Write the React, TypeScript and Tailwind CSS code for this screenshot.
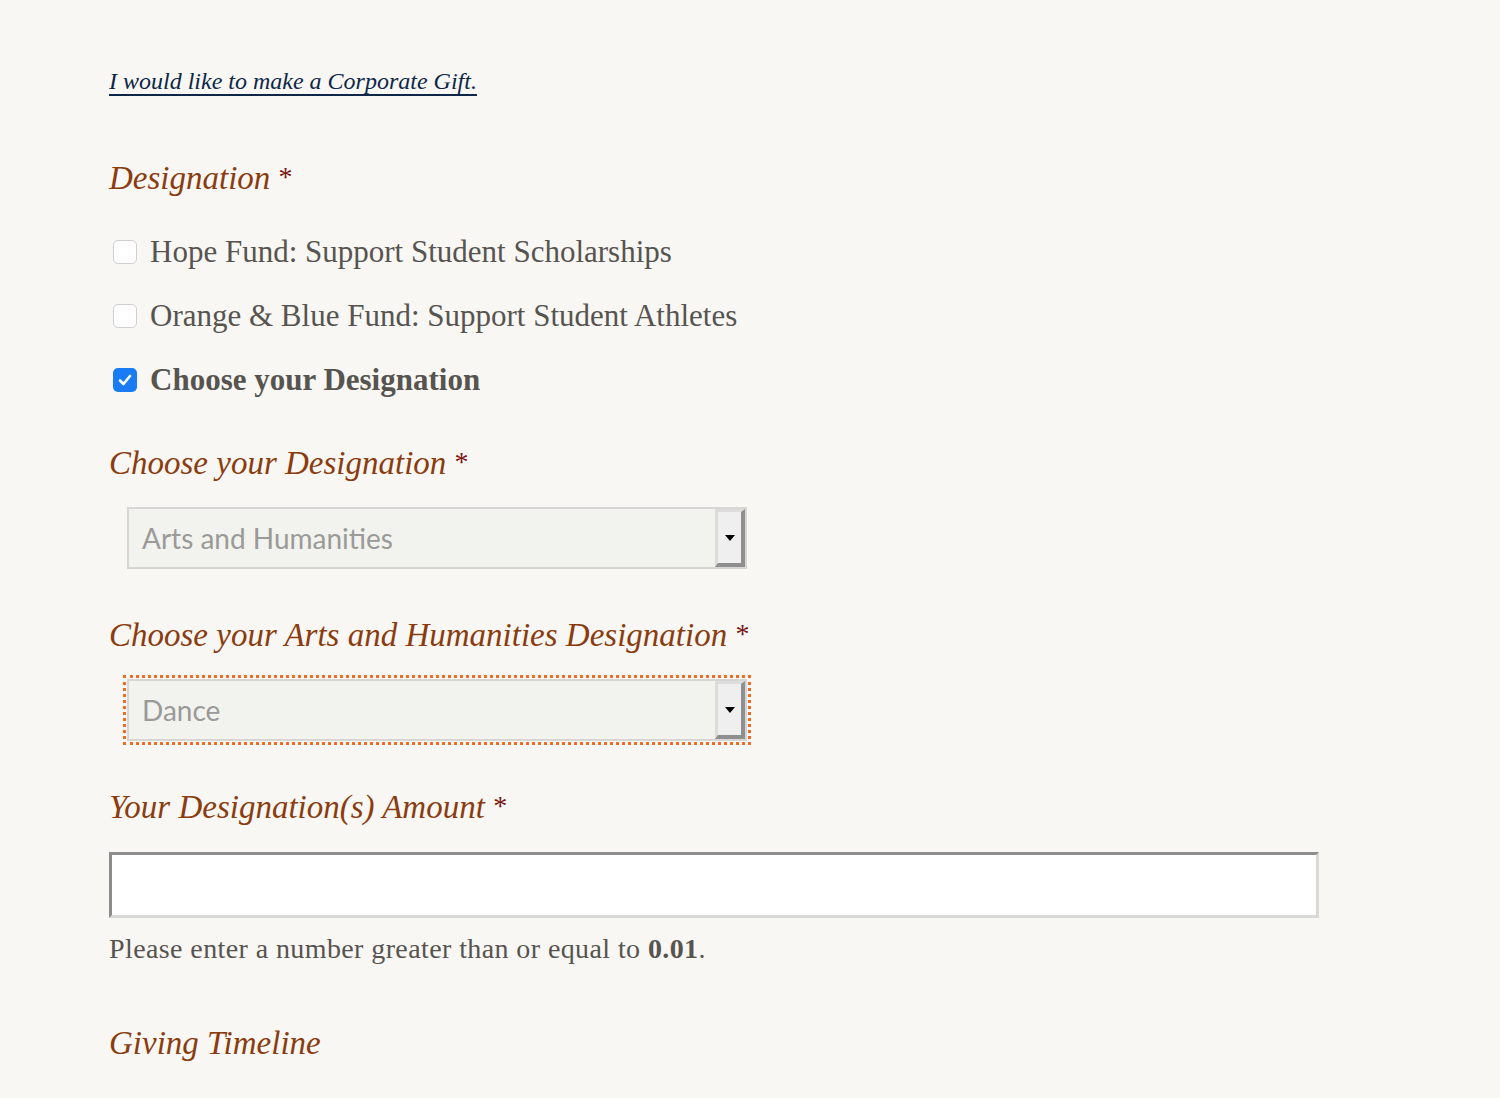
import React from "react";

const serif = { fontFamily: '"Liberation Serif", "DejaVu Serif", serif' };

function Label({ children }: { children: React.ReactNode }) {
  return (
    <div className="italic text-[33px] leading-[40px] text-[#8a3c0f]" style={serif}>
      {children} <span className="text-[#7a1313] not-italic text-[28px] relative top-[-3px]">*</span>
    </div>
  );
}

function Box({ checked }: { checked?: boolean }) {
  if (checked)
    return (
      <div className="w-[24px] h-[24px] rounded-[5px] bg-[#1a7cf5] flex items-center justify-center shrink-0">
        <svg width="16" height="16" viewBox="0 0 16 16">
          <path d="M3 8.5 L6.5 12 L13 4" stroke="white" strokeWidth="2.6" fill="none" strokeLinecap="round" strokeLinejoin="round" />
        </svg>
      </div>
    );
  return <div className="w-[24px] h-[24px] rounded-[5px] bg-white border border-[#cfcfcf] shrink-0" />;
}

function Select({ value }: { value: string }) {
  return (
    <div className="w-[620px] h-[62px] flex border-2 border-[#d6d6d4] bg-[#f2f2ee]">
      <div className="flex-1 flex items-center pl-[13px] text-[28px] text-[#9a9a98]" style={{ fontFamily: "Lato, sans-serif" }}>
        {value}
      </div>
      <div className="w-[30px] h-full bg-[#efefef] border-t-[3px] border-l-[3px] border-t-[#dcdcdc] border-l-[#dcdcdc] border-r-[4px] border-b-[4px] border-r-[#8f8f8f] border-b-[#8f8f8f] flex items-center justify-center">
        <svg width="10" height="6" viewBox="0 0 10 6">
          <path d="M0 0 H10 L5 6 Z" fill="#000" />
        </svg>
      </div>
    </div>
  );
}

export default function App() {
  return (
    <div className="min-h-[1098px] w-full bg-[#f8f7f4] pl-[109px] pt-[64px]">
      <a href="#" className="italic text-[24px] leading-[34px] text-[#0e2748] underline decoration-[2px] underline-offset-[5px]" style={serif}>
        I would like to make a Corporate Gift.
      </a>
      <div className="mt-[60px]">
        <Label>Designation</Label>
      </div>
      <div className="mt-[32px] flex flex-col gap-[24px] text-[#575450] text-[31px] leading-[40px] pl-[4px]" style={serif}>
        <div className="flex items-center gap-[13px]">
          <Box />
          <span>Hope Fund: Support Student Scholarships</span>
        </div>
        <div className="flex items-center gap-[13px]">
          <Box />
          <span>Orange &amp; Blue Fund: Support Student Athletes</span>
        </div>
        <div className="flex items-center gap-[13px]">
          <Box checked />
          <span className="font-bold">Choose your Designation</span>
        </div>
      </div>
      <div className="mt-[43px]">
        <Label>Choose your Designation</Label>
      </div>
      <div className="mt-[22px] pl-[18px]">
        <Select value="Arts and Humanities" />
      </div>
      <div className="mt-[46px]">
        <Label>Choose your Arts and Humanities Designation</Label>
      </div>
      <div className="mt-[18px] pl-[14px]">
        <div className="inline-block border-[3px] border-dotted border-[#f26b26] p-[1px]">
          <Select value="Dance" />
        </div>
      </div>
      <div className="mt-[42px]">
        <Label>Your Designation(s) Amount</Label>
      </div>
      <div className="mt-[23px] w-[1210px] h-[66px] bg-white border-t-[3px] border-l-[3px] border-t-[#8c8c8c] border-l-[#8c8c8c] border-b-[3px] border-r-[3px] border-b-[#d9d9d9] border-r-[#d9d9d9]" />
      <div className="mt-[15px] text-[28px] tracking-[0.4px] leading-[32px] text-[#575450]" style={serif}>
        Please enter a number greater than or equal to <span className="font-bold">0.01</span>.
      </div>
      <div className="mt-[58px]">
        <div className="italic text-[33px] leading-[40px] text-[#8a3c0f]" style={serif}>Giving Timeline</div>
      </div>
    </div>
  );
}
